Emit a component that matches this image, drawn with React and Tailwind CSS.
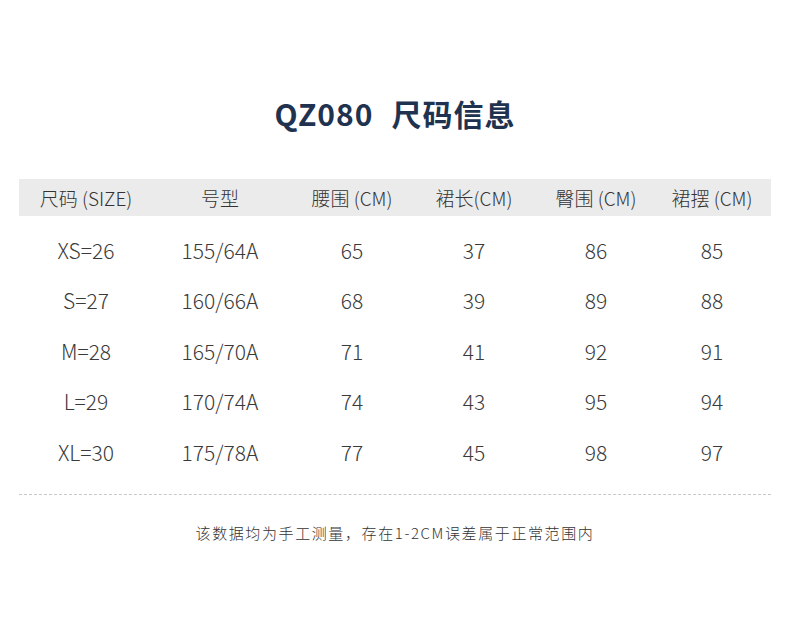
import React from "react";

const headers = ["尺码 (SIZE)", "号型", "腰围 (CM)", "裙长(CM)", "臀围 (CM)", "裙摆 (CM)"];

const rows = [
  ["XS=26", "155/64A", "65", "37", "86", "85"],
  ["S=27", "160/66A", "68", "39", "89", "88"],
  ["M=28", "165/70A", "71", "41", "92", "91"],
  ["L=29", "170/74A", "74", "43", "95", "94"],
  ["XL=30", "175/78A", "77", "45", "98", "97"],
];

const widths = ["w-[134px]", "w-[134px]", "w-[130px]", "w-[114px]", "w-[130px]", "w-[102px]"];

function App() {
  return (
    <div
      className="w-[790px] h-[636px] bg-white flex flex-col items-center"
      style={{ fontFamily: '"Noto Sans CJK SC", "Noto Sans", sans-serif' }}
    >
      <h1 className="mt-[90px] h-[46px] flex items-center text-[30px] leading-[46px] font-bold text-[#1f3350] tracking-[1px]">
        <span className="mr-[18px]">QZ080</span>
        <span>尺码信息</span>
      </h1>

      <div className="mt-[43px] w-[752px]">
        {/* Header band */}
        <div className="flex h-[37px] bg-[#ebebeb] items-center">
          {headers.map((h, i) => (
            <div key={i} className={`${widths[i]} text-center text-[19px] font-light text-[#333] leading-[37px]`}>
              {h}
            </div>
          ))}
        </div>

        {/* Rows */}
        <div className="pt-[9px]">
          {rows.map((r, ri) => (
            <div key={ri} className="flex h-[50.5px] items-center">
              {r.map((c, ci) => (
                <div key={ci} className={`${widths[ci]} text-center text-[21px] font-light text-[#3a3a3a]`}>
                  {c}
                </div>
              ))}
            </div>
          ))}
        </div>

        <div className="mt-[16px] border-t border-dashed border-[#c8c8c8]" />
      </div>

      <p className="mt-[27px] text-[15px] font-light text-[#333] tracking-[1.6px]">
        该数据均为手工测量，存在1-2CM误差属于正常范围内
      </p>
    </div>
  );
}

export default App;
